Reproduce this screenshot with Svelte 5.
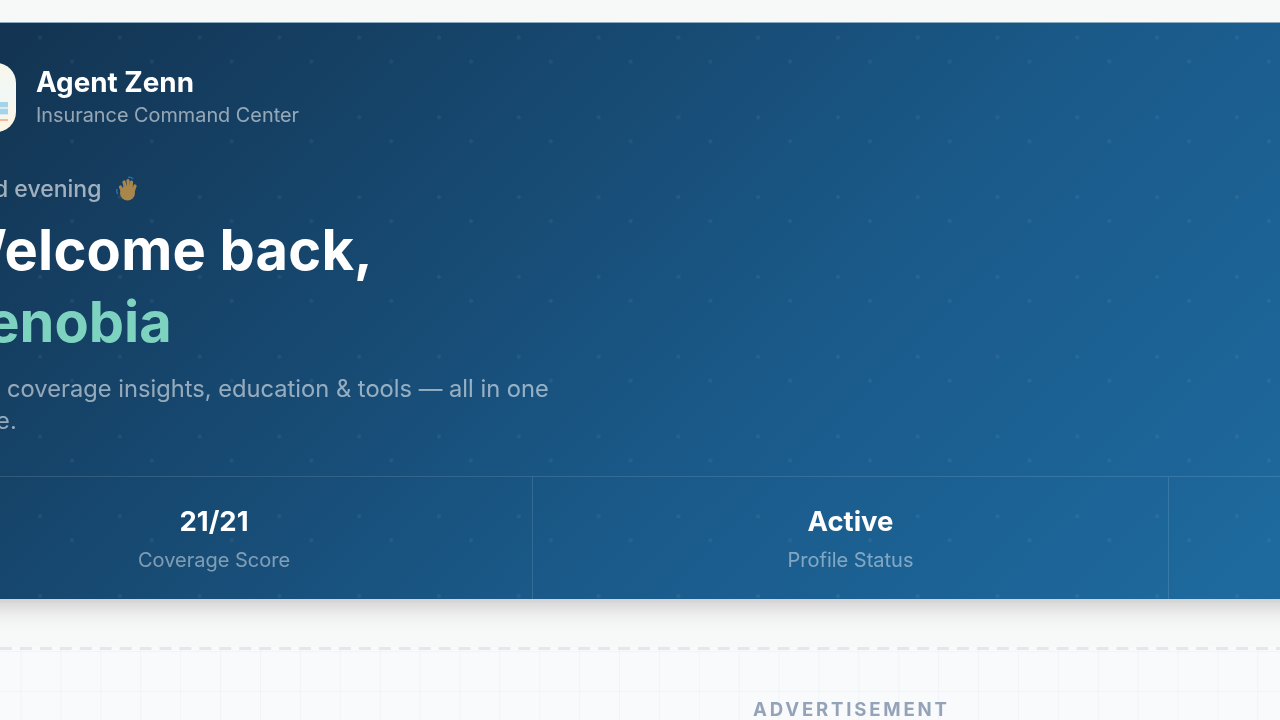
<script>
    const stats = [
        { value: '21/21', label: 'Coverage Score' },
        { value: 'Active', label: 'Profile Status' },
        { value: '', label: '' }
    ];
</script>

<div class="page">
    <section class="hero">
        <div class="hero-body">
            <div class="brand">
                <div class="logo">
                    <span class="logo-bars"></span>
                    <span class="logo-line"></span>
                </div>
                <div class="brand-text">
                    <div class="brand-name">Agent Zenn</div>
                    <div class="brand-sub">Insurance Command Center</div>
                </div>
            </div>
            <div class="greeting">
                Good evening
                <svg class="wave" viewBox="0 0 24 26" width="24" height="26" aria-hidden="true">
                    <path d="M1 13 Q0 16 2 18" class="wave-line" />
                    <path d="M12 1.5 Q15 0.5 17 3" class="wave-line" />
                    <g class="wave-fingers">
                        <path d="M7 17 L4.5 11" />
                        <path d="M10 14 L8 6" />
                        <path d="M12.5 13 L12 4.5" />
                        <path d="M15 14 L15.5 6" />
                        <path d="M17 16 L19 10" />
                    </g>
                    <ellipse class="wave-palm" cx="11.5" cy="17" rx="7.5" ry="7.5" />
                </svg>
            </div>
            <h1>Welcome back,<br /><span class="name">Zenobia</span></h1>
            <p class="lede">Your coverage insights, education &amp; tools — all in one place.</p>
        </div>
        <div class="stats">
            {#each stats as stat}
                <div class="stat">
                    <div class="stat-value">{stat.value}</div>
                    <div class="stat-label">{stat.label}</div>
                </div>
            {/each}
        </div>
    </section>

    <section class="ad">
        <div class="ad-label">ADVERTISEMENT</div>
    </section>
</div>

<style>
    :global(body) {
        background: #f7f8f8;
        overflow: hidden;
    }

    .page {
        width: 1908px;
        height: 720px;
        margin-left: -104px;
        padding-top: 22px;
        box-sizing: border-box;
        overflow: hidden;
        font-family: Inter, "Liberation Sans", sans-serif;
        filter: blur(0.5px);
    }

    .hero {
        height: 577px;
        display: flex;
        flex-direction: column;
        border-top: 1px solid #8fa9bd;
        box-sizing: border-box;
        color: #fff;
        background-image:
            radial-gradient(circle, rgba(255, 255, 255, 0.055) 1.6px, transparent 2.4px),
            radial-gradient(circle, rgba(255, 255, 255, 0.055) 1.6px, transparent 2.4px),
            linear-gradient(135deg, #12304c 0%, #1a5a8a 50%, #2176ae 100%);
        background-size: 79.8px 79.8px, 79.8px 79.8px, 100% 100%;
        background-position: 104.1px -25.4px, 136.1px -1.4px, 0 0;
        box-shadow: 0 16px 26px -14px rgba(40, 40, 30, 0.32);
    }

    .hero-body {
        flex: 1;
        padding: 40px 53px 0;
    }

    .brand {
        display: flex;
        align-items: center;
        gap: 20px;
    }

    .brand-text {
        margin-top: -2px;
    }

    .logo {
        width: 67px;
        height: 69px;
        border-radius: 20px;
        position: relative;
        background: linear-gradient(160deg, #fdf5e2 0%, #f1f8f6 55%, #fff4de 100%);
    }

    .logo-bars {
        position: absolute;
        right: 8px;
        bottom: 17px;
        width: 18px;
        height: 13px;
        background: repeating-linear-gradient(180deg, #a5d3ea 0 5px, #d6ebf3 5px 7px);
    }

    .logo-line {
        position: absolute;
        right: 8px;
        bottom: 11px;
        width: 18px;
        height: 2px;
        background: #f5b79a;
    }

    .brand-name {
        font-size: 27.8px;
        font-weight: 700;
        line-height: 36px;
    }

    .brand-sub {
        font-size: 19.85px;
        line-height: 30px;
        color: rgba(255, 255, 255, 0.55);
    }

    .greeting {
        display: flex;
        align-items: center;
        gap: 15px;
        margin-top: 40px;
        font-size: 23px;
        font-weight: 500;
        line-height: 34px;
        color: rgba(255, 255, 255, 0.6);
    }

    .wave-palm {
        fill: #a9864b;
    }

    .wave-fingers {
        fill: none;
        stroke: #a9864b;
        stroke-width: 3.2;
        stroke-linecap: round;
    }

    .wave-line {
        fill: none;
        stroke: #2a6ea0;
        stroke-width: 1.5;
    }

    h1 {
        margin: 8px 0 0;
        font-size: 56px;
        font-weight: 700;
        line-height: 72px;
        letter-spacing: 0.2px;
    }

    .name {
        color: #7dd3c0;
        letter-spacing: 0;
    }

    .lede {
        width: 610px;
        margin: 15px 0 0;
        font-size: 23.7px;
        line-height: 32px;
        color: rgba(255, 255, 255, 0.55);
    }

    .stats {
        display: grid;
        grid-template-columns: repeat(3, 1fr);
        height: 123px;
        border-top: 1px solid rgba(255, 255, 255, 0.12);
        box-sizing: border-box;
    }

    .stat {
        padding-top: 26px;
        text-align: center;
    }

    .stat + .stat {
        border-left: 1px solid rgba(255, 255, 255, 0.12);
    }

    .stat-value {
        font-size: 27.5px;
        font-weight: 700;
        line-height: 36px;
    }

    .stat-label {
        margin-top: 7px;
        font-size: 20px;
        line-height: 28px;
        color: rgba(255, 255, 255, 0.45);
    }

    .ad {
        margin-top: 48px;
        height: 80px;
        padding-top: 50px;
        box-sizing: border-box;
        text-align: center;
        background-color: #f9fafc;
        background-image:
            linear-gradient(90deg, #e2e8f0 12px, transparent 12px),
            linear-gradient(90deg, #f0f4f8 1.33px, transparent 1.33px),
            linear-gradient(180deg, #f0f4f8 1.33px, transparent 1.33px);
        background-size: 19.95px 3px, 39.9px 39.9px, 39.9px 39.9px;
        background-position: 4.3px 0, 5px 0, 0 4.1px;
        background-repeat: repeat-x, repeat, repeat;
    }

    .ad-label {
        font-size: 18.6px;
        font-weight: 700;
        letter-spacing: 2.8px;
        text-indent: 2.8px;
        line-height: 24px;
        color: #94a3b8;
    }
</style>
